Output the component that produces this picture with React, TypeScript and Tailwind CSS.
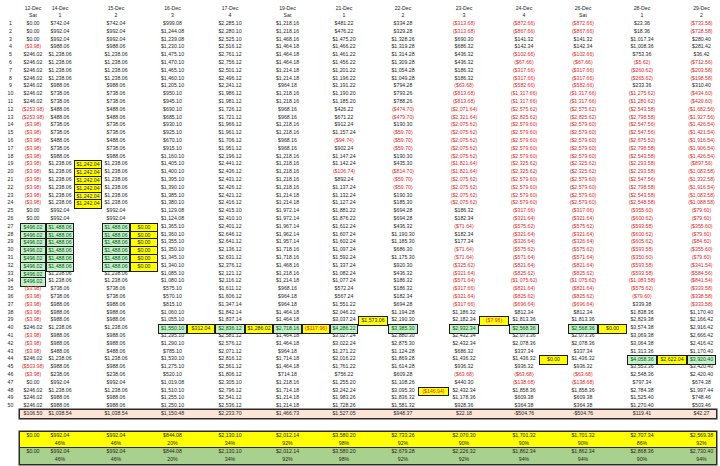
import React from "react"

type Row = {
  v: string[]
  y?: Record<number, string>
  g?: number[]
}

// grid: row number + 13 date columns, a flag column after each date from 14-Dec to 28-Dec
const GRID =
  "grid grid-cols-[20px_26px_28px_28px_28px_28px_29px_28px_30px_28px_29px_28px_28px_30px_30px_31px_30px_30px_30px_29px_30px_29px_30px_30px_29px]"
const INNER =
  "grid grid-cols-[26px_28px_28px_28px_28px_29px_28px_30px_28px_29px_28px_28px_30px_30px_31px_30px_30px_30px_29px_30px_29px_30px_30px_29px]"

const DATES = ["12-Dec", "14-Dec", "15-Dec", "16-Dec", "17-Dec", "19-Dec", "21-Dec", "22-Dec", "23-Dec", "24-Dec", "26-Dec", "28-Dec", "29-Dec"]
const DAYS = ["Sat", "1", "2", "3", "4", "Sat", "1", "2", "3", "4", "Sat", "1", "2"]

const flag1 = { 1: "$1,242.04" }
const block27 = { 2: "$0.00" }

const rows: Row[] = [
  { v: ["$0.00", "$742.04", "$742.04", "$999.08", "$2,285.10", "$1,218.16", "$481.22", "$334.28", "($313.68)", "($872.66)", "($872.66)", "$23.36", "($733.58)"] },
  { v: ["$0.00", "$992.04", "$992.04", "$1,244.08", "$2,280.10", "$1,218.16", "$476.22", "$329.28", "($313.68)", "($867.66)", "($867.66)", "$18.36", "($728.58)"] },
  { v: ["$0.00", "$992.04", "$992.04", "$1,239.08", "$2,525.10", "$1,468.16", "$1,475.20", "$1,328.26", "$690.30", "$141.32", "$141.32", "$1,017.34", "$280.40"] },
  { v: ["($3.98)", "$988.06", "$988.06", "$1,230.10", "$2,516.12", "$1,464.18", "$1,466.22", "$1,319.28", "$686.32", "$142.34", "$142.34", "$1,008.36", "$281.42"] },
  { v: ["$246.02", "$1,238.06", "$1,238.06", "$1,475.10", "$2,761.12", "$1,464.18", "$1,461.22", "$1,314.28", "$436.32", "($102.66)", "($102.66)", "$753.36", "$36.42"] },
  { v: ["$246.02", "$1,238.06", "$1,238.06", "$1,470.10", "$2,756.12", "$1,464.18", "$1,456.22", "$1,309.28", "$436.32", "($67.66)", "($67.66)", "($5.62)", "($712.56)"] },
  { v: ["$246.02", "$1,238.06", "$1,238.06", "$1,465.10", "$2,501.12", "$1,214.18", "$1,201.22", "$1,054.28", "$186.32", "($317.66)", "($317.66)", "($260.62)", "($203.58)"] },
  { v: ["$246.02", "$1,238.06", "$1,238.06", "$1,460.10", "$2,496.12", "$1,214.18", "$1,196.22", "$1,049.28", "$186.32", "($317.66)", "($317.66)", "($265.62)", "($198.58)"] },
  { v: ["$246.02", "$988.06", "$988.06", "$1,205.10", "$2,241.12", "$964.18", "$1,191.22", "$794.28", "($63.68)", "($582.66)", "($582.66)", "$233.36", "$310.40"] },
  { v: ["$246.02", "$738.06", "$738.06", "$950.10", "$1,986.12", "$1,218.16", "$1,190.20", "$793.26", "($813.68)", "($1,317.66)", "($1,317.66)", "($1,275.62)", "($434.60)"] },
  { v: ["$246.02", "$738.06", "$738.06", "$945.10", "$1,981.12", "$1,218.16", "$1,185.20", "$788.26", "($813.68)", "($1,317.66)", "($1,317.66)", "($1,280.62)", "($429.60)"] },
  { v: ["($253.98)", "$488.06", "$488.06", "$690.10", "$1,726.12", "$968.16", "$426.22", "($474.70)", "($2,071.64)", "($2,575.62)", "($2,575.62)", "($2,543.58)", "($1,682.56)"] },
  { v: ["($253.98)", "$488.06", "$488.06", "$685.10", "$1,721.12", "$968.16", "$671.22", "($479.70)", "($2,321.64)", "($2,825.62)", "($2,825.62)", "($2,798.58)", "($1,927.56)"] },
  { v: ["($3.98)", "$738.06", "$738.06", "$930.10", "$1,966.12", "$1,218.16", "$912.24", "$190.30", "($2,075.62)", "($2,579.60)", "($2,579.60)", "($2,547.56)", "($1,426.54)"] },
  { v: ["($3.98)", "$738.06", "$738.06", "$925.10", "$1,961.12", "$1,218.16", "$1,157.24", "($59.70)", "($2,075.62)", "($2,579.60)", "($2,579.60)", "($2,547.56)", "($1,421.54)"] },
  { v: ["($3.98)", "$488.06", "$488.06", "$670.10", "$1,706.12", "$968.16", "($94.74)", "($59.70)", "($2,075.62)", "($2,579.60)", "($2,579.60)", "($2,675.52)", "($1,916.54)"] },
  { v: ["($3.98)", "$738.06", "$738.06", "$915.10", "$1,951.12", "$968.16", "$902.24", "($59.70)", "($2,075.62)", "($2,579.60)", "($2,579.60)", "($2,798.58)", "($1,906.54)"] },
  { v: ["($3.98)", "$988.06", "$988.06", "$1,160.10", "$2,196.12", "$1,218.16", "$1,147.24", "$190.30", "($2,075.62)", "($2,579.60)", "($2,579.60)", "($2,543.58)", "($1,426.54)"] },
  { v: ["($3.98)", "$1,238.06", "$1,238.06", "$1,405.10", "$2,441.12", "$1,218.16", "$1,142.24", "$435.30", "($1,821.64)", "($2,325.62)", "($2,325.62)", "($2,293.58)", "($897.56)"], y: flag1 },
  { v: ["($3.98)", "$1,238.06", "$1,238.06", "$1,400.10", "$2,436.12", "$1,218.16", "($106.74)", "($814.70)", "($1,821.64)", "($2,325.62)", "($2,325.62)", "($2,293.58)", "($1,083.58)"], y: flag1 },
  { v: ["($3.98)", "$1,238.06", "$1,238.06", "$1,395.10", "$2,431.12", "$1,218.16", "$892.24", "($59.70)", "($2,075.62)", "($2,579.60)", "($2,579.60)", "($2,547.56)", "($1,332.58)"], y: flag1 },
  { v: ["($3.98)", "$1,238.06", "$1,238.06", "$1,390.10", "$2,426.12", "$1,218.16", "$1,137.24", "($59.70)", "($2,075.62)", "($2,579.60)", "($2,579.60)", "($2,798.58)", "($1,916.54)"], y: flag1 },
  { v: ["($3.98)", "$1,238.06", "$1,238.06", "$1,385.10", "$2,421.12", "$1,214.18", "$1,132.24", "$190.30", "($2,075.62)", "($2,579.60)", "($2,579.60)", "($2,543.58)", "($1,083.58)"], y: flag1 },
  { v: ["($3.98)", "$1,238.06", "$1,238.06", "$1,380.10", "$2,416.12", "$1,214.18", "$1,127.24", "$185.30", "($2,075.62)", "($2,579.60)", "($2,579.60)", "($2,548.58)", "($1,088.58)"], y: flag1 },
  { v: ["$0.00", "$992.04", "$992.04", "$1,129.08", "$2,415.10", "$1,972.14", "$1,881.22", "$694.28", "$186.32", "($317.66)", "($317.66)", "($355.60)", "($79.60)"] },
  { v: ["$0.00", "$992.04", "$992.04", "$1,124.08", "$2,410.10", "$1,972.14", "$1,876.22", "$694.28", "$182.34", "($321.64)", "($321.64)", "($600.62)", "($79.60)"] },
  { v: ["$496.02", "$1,488.06", "$1,488.06", "$1,365.10", "$2,401.12", "$1,967.14", "$1,612.24", "$436.32", "($71.64)", "($575.62)", "($575.62)", "($593.58)", "($355.60)"], y: block27, g: [0, 1, 2] },
  { v: ["$496.02", "$1,488.06", "$1,488.06", "$1,360.10", "$2,646.12", "$1,962.14", "$1,607.24", "$1,190.30", "$182.34", "($321.64)", "($321.64)", "($600.62)", "($79.60)"], y: block27, g: [0, 1, 2] },
  { v: ["$496.02", "$1,488.06", "$1,488.06", "$1,355.10", "$2,641.12", "$1,957.14", "$1,602.24", "$1,185.30", "$177.34", "($326.64)", "($326.64)", "($605.62)", "($84.60)"], y: block27, g: [0, 1, 2] },
  { v: ["$496.02", "$1,488.06", "$1,488.06", "$1,350.10", "$2,136.12", "$1,718.16", "$1,097.24", "$686.30", "($71.64)", "($575.62)", "($575.62)", "($593.58)", "($355.60)"], y: block27, g: [0, 1, 2] },
  { v: ["$496.02", "$1,488.06", "$1,488.06", "$1,345.10", "$2,631.12", "$1,718.16", "$1,592.24", "$1,175.30", "($71.64)", "($571.64)", "($571.64)", "($350.60)", "($79.60)"], y: block27, g: [0, 1, 2] },
  { v: ["$496.02", "$1,488.06", "$1,488.06", "$1,340.10", "$2,376.12", "$1,468.16", "$1,337.24", "$920.30", "($325.62)", "($821.64)", "($821.64)", "($593.58)", "($341.54)"], y: block27, g: [0, 1, 2] },
  { v: ["$496.02", "$1,238.06", "$1,238.06", "$1,085.10", "$2,121.12", "$1,218.16", "$1,082.24", "$436.32", "($321.64)", "($825.62)", "($825.62)", "($593.58)", "($584.56)"], g: [0] },
  { v: ["$496.02", "$1,238.06", "$1,238.06", "$1,080.10", "$2,116.12", "$1,214.18", "$1,077.24", "$186.32", "($571.64)", "($1,075.62)", "($1,075.62)", "($1,083.58)", "($841.54)"], g: [0] },
  { v: ["($3.98)", "$738.06", "$738.06", "$575.10", "$1,611.12", "$968.16", "$572.24", "$186.32", "($317.66)", "($821.64)", "($821.64)", "($575.62)", "($333.58)"] },
  { v: ["($3.98)", "$738.06", "$738.06", "$570.10", "$1,606.12", "$964.18", "$567.24", "$182.34", "($321.64)", "($825.62)", "($825.62)", "($79.60)", "($338.58)"] },
  { v: ["($3.98)", "$988.06", "$988.06", "$815.10", "$1,347.14", "$964.18", "$1,551.22", "$694.28", "($317.66)", "($696.64)", "($696.64)", "$339.38", "($333.58)"] },
  { v: ["($3.98)", "$988.06", "$988.06", "$1,060.10", "$1,842.14", "$1,464.18", "$2,046.22", "$1,194.28", "$1,186.32", "$812.34", "$812.34", "$1,838.36", "$1,170.40"] },
  { v: ["($3.98)", "$988.06", "$988.06", "$1,055.10", "$1,837.14", "$1,464.18", "$3,037.24", "$2,190.30", "$2,182.34", "$1,813.36", "$1,813.36", "$2,829.38", "$2,166.42"], y: { 6: "$1,573.06", 8: "($7.96)" } },
  {
    v: ["$246.02", "$1,238.06", "$1,238.06", "$1,550.10", "$2,836.12", "$2,718.16", "$4,286.22", "$3,385.30", "$2,932.34", "$2,568.36", "$2,568.36", "$3,574.38", "$2,916.42"],
    y: { 3: "$312.04", 4: "$1,286.02", 5: "($117.96)", 10: "$0.00" },
    g: [3, 4, 5, 6, 7, 8, 9, 10],
  },
  { v: ["($3.98)", "$988.06", "$988.06", "$1,295.10", "$2,581.12", "$1,464.18", "$3,027.24", "$2,880.30", "$2,432.34", "$2,073.36", "$2,073.36", "$3,069.38", "$2,666.42"] },
  { v: ["($3.98)", "$988.06", "$988.06", "$1,290.10", "$2,576.12", "$1,464.18", "$3,022.24", "$2,875.30", "$2,432.34", "$2,078.36", "$2,078.36", "$3,064.38", "$2,416.42"] },
  { v: ["($3.98)", "$488.06", "$488.06", "$785.10", "$2,071.12", "$964.18", "$1,271.22", "$1,124.28", "$686.32", "$337.34", "$337.34", "$1,313.36", "$1,170.40"] },
  { v: ["$246.02", "$1,238.06", "$1,238.06", "$1,530.10", "$2,816.12", "$1,714.18", "$2,016.22", "$1,869.28", "$1,436.32", "$1,436.32", "$1,436.32", "$4,058.36", "$3,920.40"], y: { 9: "$0.00", 11: "$2,622.04" }, g: [11, 12] },
  { v: ["($503.98)", "$988.06", "$988.06", "$1,275.10", "$2,561.12", "$1,464.18", "$1,761.22", "$1,614.28", "$936.32", "$936.32", "$936.32", "$3,553.36", "$3,420.40"] },
  { v: ["($3.98)", "$238.06", "$238.06", "$520.10", "$1,806.12", "$714.18", "$756.22", "$609.28", "($63.68)", "($63.68)", "($63.68)", "$2,548.36", "$2,420.40"] },
  { v: ["$0.00", "$992.04", "$992.04", "$1,019.08", "$2,305.10", "$1,218.16", "$1,255.20", "$1,108.26", "$440.30", "($138.68)", "($138.68)", "$797.34", "$674.38"] },
  { v: ["$246.02", "$1,238.06", "$1,238.06", "$1,510.10", "$2,796.12", "$1,714.18", "$3,242.24", "$3,095.30", "$2,432.34", "$1,858.36", "$1,858.36", "$2,784.38", "$1,997.44"], y: { 7: "($146.94)" } },
  { v: ["$246.02", "$988.06", "$988.06", "$1,255.10", "$2,541.12", "$1,214.18", "$1,983.26", "$1,836.32", "$1,178.36", "$609.38", "$609.38", "$1,525.40", "$748.46"] },
  { v: ["$246.02", "$988.06", "$988.06", "$1,250.10", "$2,536.12", "$1,214.18", "$1,728.26", "$1,581.32", "$928.36", "$364.38", "$364.38", "$1,270.40", "$503.46"] },
]

const totals = ["$106.50", "$1,038.54", "$1,038.54", "$1,150.48", "$2,233.70", "$1,466.73", "$1,527.05", "$948.37", "$22.18", "-$504.76", "-$504.76", "$119.41", "$42.27"]

const yellowVals = ["$0.00", "$992.04", "$992.04", "$844.08", "$2,130.10", "$2,012.14", "$3,580.20", "$2,733.26", "$2,070.30", "$1,701.32", "$1,701.32", "$2,707.34", "$2,569.38"]
const yellowPct = ["", "46%", "46%", "20%", "34%", "92%", "98%", "92%", "90%", "90%", "90%", "86%", "92%"]
const greenVals = ["$0.00", "$992.04", "$992.04", "$844.08", "$2,130.10", "$2,012.14", "$3,580.20", "$2,679.28", "$2,226.32", "$1,862.34", "$1,862.34", "$2,868.36", "$2,730.40"]
const greenPct = ["", "46%", "46%", "20%", "34%", "92%", "98%", "92%", "92%", "94%", "94%", "90%", "94%"]

const isNeg = (s: string) => s.startsWith("(")

// 13 date values -> 24 inner columns; flag k sits right after date k (k = 1..11)
function spread(dates: string[], flags?: Record<number, string>) {
  const out: { text: string; date: number; flag: number }[] = []
  dates.forEach((d, i) => {
    out.push({ text: d, date: i, flag: 0 })
    if (i >= 1 && i < dates.length - 1) out.push({ text: flags?.[i] ?? "", date: -1, flag: i })
  })
  return out
}

function Cell({ text, kind }: { text: string; kind: "plain" | "green" | "yellow" }) {
  if (kind === "green") {
    return <div className="text-center whitespace-nowrap bg-[#c6efce] text-[#006100] border border-[#1c1c1c]">{text}</div>
  }
  if (kind === "yellow") {
    return (
      <div className={isNeg(text) ? "text-center whitespace-nowrap bg-[#ffff00] text-[#e8251f] border border-[#1c1c1c]" : "text-center whitespace-nowrap bg-[#ffff00] text-[#2b2b2b] border border-[#1c1c1c]"}>
        {text}
      </div>
    )
  }
  return <div className={isNeg(text) ? "text-center whitespace-nowrap text-[#e8251f]" : "text-center whitespace-nowrap"}>{text}</div>
}

function Band({ vals, pct, bg }: { vals: string[]; pct: string[]; bg: string }) {
  return (
    <div className={bg}>
      <div className={INNER + " h-[7.8px]"}>
        {spread(vals).map((c, i) => (
          <div key={i} className="text-center whitespace-nowrap">{c.text}</div>
        ))}
      </div>
      <div className={INNER + " h-[7.8px]"}>
        {spread(pct).map((c, i) => (
          <div key={i} className="text-center whitespace-nowrap">{c.text}</div>
        ))}
      </div>
    </div>
  )
}

export default function App() {
  return (
    <div className="w-[720px] h-[466px] overflow-hidden bg-white pt-[4.5px] font-['Liberation_Sans',Arial,sans-serif] text-[5.2px] leading-[7.8px] text-[#262626]">
      <div className={GRID + " h-[7.8px]"}>
        <div />
        {spread(DATES).map((c, i) => (
          <div key={i} className="text-center whitespace-nowrap">{c.flag ? "" : c.text}</div>
        ))}
      </div>
      <div className={GRID + " h-[7.8px]"}>
        <div />
        {spread(DAYS).map((c, i) => (
          <div key={i} className="text-center whitespace-nowrap">{c.flag ? "" : c.text}</div>
        ))}
      </div>

      {rows.map((r, ri) => (
        <div key={ri} className={GRID + " h-[7.8px]"}>
          <div className="text-center pl-[1px]">{ri + 1}</div>
          {spread(r.v, r.y).map((c, i) => {
            if (c.flag) return c.text ? <Cell key={i} text={c.text} kind="yellow" /> : <div key={i} />
            return <Cell key={i} text={c.text} kind={r.g?.includes(c.date) ? "green" : "plain"} />
          })}
        </div>
      ))}

      <div className="flex h-[7.8px]">
        <div className="w-[20px] shrink-0" />
        <div className={INNER + " w-[696px] bg-[#fce4d6] ring-[1.5px] ring-[#2a2a2a]"}>
          {spread(totals).map((c, i) => (
            <div key={i} className="text-center whitespace-nowrap">{c.flag ? "" : c.text}</div>
          ))}
        </div>
      </div>

      <div className="h-[14px]" />

      <div className="flex">
        <div className="w-[20px] shrink-0" />
        <div className="w-[696px] ring-[1.5px] ring-[#2a2a2a]">
          <Band vals={yellowVals} pct={yellowPct} bg="bg-[#ffff00] border-b-[1.5px] border-[#2a2a2a]" />
          <Band vals={greenVals} pct={greenPct} bg="bg-[#a9d08e]" />
        </div>
      </div>
    </div>
  )
}
